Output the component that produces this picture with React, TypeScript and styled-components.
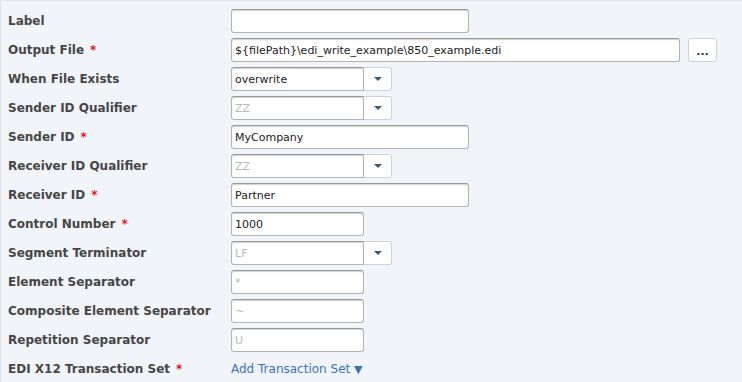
import React from 'react'
import styled, { createGlobalStyle } from 'styled-components'

const GlobalStyle = createGlobalStyle`
  html, body {
    margin: 0;
    padding: 0;
    background: #f1f4f9;
  }
`

type Field =
  | { label: string; required?: boolean; kind: 'text'; value: string; width: number; muted?: boolean }
  | { label: string; required?: boolean; kind: 'file'; value: string }
  | { label: string; required?: boolean; kind: 'select'; value: string; muted?: boolean }
  | { label: string; required?: boolean; kind: 'link'; value: string }

const fields: Field[] = [
  { label: 'Label', kind: 'text', value: '', width: 238 },
  { label: 'Output File', required: true, kind: 'file', value: '${filePath}\\edi_write_example\\850_example.edi' },
  { label: 'When File Exists', kind: 'select', value: 'overwrite' },
  { label: 'Sender ID Qualifier', kind: 'select', value: 'ZZ', muted: true },
  { label: 'Sender ID', required: true, kind: 'text', value: 'MyCompany', width: 238 },
  { label: 'Receiver ID Qualifier', kind: 'select', value: 'ZZ', muted: true },
  { label: 'Receiver ID', required: true, kind: 'text', value: 'Partner', width: 238 },
  { label: 'Control Number', required: true, kind: 'text', value: '1000', width: 133 },
  { label: 'Segment Terminator', kind: 'select', value: 'LF', muted: true },
  { label: 'Element Separator', kind: 'text', value: '*', width: 133, muted: true },
  { label: 'Composite Element Separator', kind: 'text', value: '~', width: 133, muted: true },
  { label: 'Repetition Separator', kind: 'text', value: 'U', width: 133, muted: true },
  { label: 'EDI X12 Transaction Set', required: true, kind: 'link', value: 'Add Transaction Set' },
]

function Control({ field }: { field: Field }) {
  switch (field.kind) {
    case 'text':
      return <TextBox $width={field.width} $muted={field.muted}>{field.value}</TextBox>
    case 'file':
      return (
        <FileRow>
          <TextBox $width={449}>{field.value}</TextBox>
          <BrowseButton>...</BrowseButton>
        </FileRow>
      )
    case 'select':
      return (
        <Combo>
          <ComboText $muted={field.muted}>{field.value}</ComboText>
          <ComboButton>
            <Caret />
          </ComboButton>
        </Combo>
      )
    case 'link':
      return (
        <AddLink>
          {field.value} <span>▼</span>
        </AddLink>
      )
  }
}

export default function App() {
  return (
    <>
      <GlobalStyle />
      <Panel>
        {fields.map((f) => (
          <Row key={f.label}>
            <FieldLabel>
              {f.label}
              {f.required && <Required>*</Required>}
            </FieldLabel>
            <Control field={f} />
          </Row>
        ))}
      </Panel>
    </>
  )
}

/* Styles */

const Panel = styled.div`
  width: 742px;
  height: 382px;
  box-sizing: border-box;
  background: #f1f4f9;
  border-top: 1px solid #dfe3e9;
  border-left: 1px solid #dfe3e9;
  padding: 8px 0 0 7px;
  display: flex;
  flex-direction: column;
  gap: 5px;
  font-family: 'DejaVu Sans', Verdana, sans-serif;
  overflow: hidden;
`

const Row = styled.div`
  display: grid;
  grid-template-columns: 223px 1fr;
  align-items: center;
  height: 24px;
`

const FieldLabel = styled.div`
  font-size: 12px;
  font-weight: bold;
  color: #464646;
  white-space: nowrap;
`

const Required = styled.span`
  color: #e8141d;
  margin-left: 6px;
`

const TextBox = styled.div<{ $width: number; $muted?: boolean }>`
  width: ${(p) => p.$width}px;
  height: 24px;
  box-sizing: border-box;
  background: #fff;
  border: 1px solid #b3b3b3;
  border-top-color: #989898;
  border-radius: 3px;
  box-shadow: inset 0 1px 1px rgba(0, 0, 0, 0.18);
  padding: 0 3px;
  display: flex;
  align-items: center;
  font-size: 11px;
  color: ${(p) => (p.$muted ? '#b9b9b9' : '#222')};
  white-space: nowrap;
  overflow: hidden;
`

const FileRow = styled.div`
  display: flex;
  align-items: center;
  gap: 8px;
`

const BrowseButton = styled.div`
  width: 29px;
  height: 24px;
  box-sizing: border-box;
  background: #fff;
  border: 1px solid #cfd3d8;
  border-radius: 3px;
  display: flex;
  align-items: flex-end;
  justify-content: center;
  padding-bottom: 5px;
  font-size: 11px;
  font-weight: bold;
  line-height: 8px;
  color: #333;
`

const Combo = styled.div`
  display: flex;
  width: 161px;
  height: 24px;
`

const ComboText = styled.div<{ $muted?: boolean }>`
  width: 133px;
  box-sizing: border-box;
  background: #fff;
  border: 1px solid #b3b3b3;
  border-top-color: #989898;
  border-radius: 3px 0 0 3px;
  box-shadow: inset 0 1px 1px rgba(0, 0, 0, 0.18);
  padding: 0 3px;
  display: flex;
  align-items: center;
  font-size: 11px;
  color: ${(p) => (p.$muted ? '#b9b9b9' : '#222')};
`

const ComboButton = styled.div`
  flex: 1;
  box-sizing: border-box;
  background: #fff;
  border: 1px solid #cfd3d8;
  border-left: none;
  border-radius: 0 3px 3px 0;
  display: flex;
  align-items: center;
  justify-content: center;
`

const Caret = styled.div`
  width: 0;
  height: 0;
  border-left: 4px solid transparent;
  border-right: 4px solid transparent;
  border-top: 4px solid #3b5a72;
`

const AddLink = styled.div`
  font-size: 12px;
  color: #3c72b8;
  white-space: nowrap;

  span {
    font-size: 11px;
  }
`
